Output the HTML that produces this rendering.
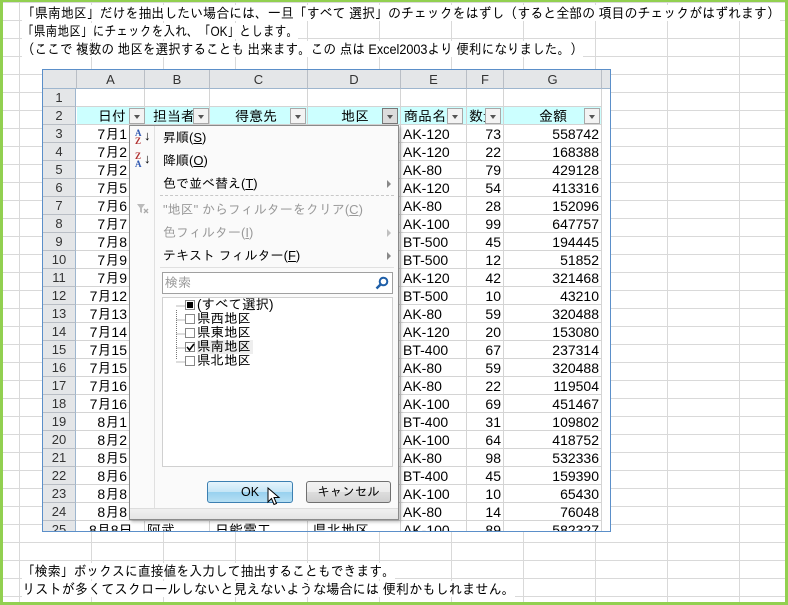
<!DOCTYPE html>
<html><head><meta charset="utf-8"><style>
*{margin:0;padding:0;box-sizing:border-box}
body{width:788px;height:605px;overflow:hidden;position:relative;background:#fff;font-family:"Liberation Sans","IPAGothic","Noto Sans CJK JP",sans-serif;font-size:14px;color:#000}
#grid{position:absolute;left:0;top:0;width:788px;height:605px;
background-image:repeating-linear-gradient(to right,transparent 0 18px,#d9d9d9 18px 19px,transparent 19px 72px),repeating-linear-gradient(to bottom,transparent 0 2px,#d9d9d9 2px 3px,transparent 3px 18px);
background-position:1px 0,0 0}
#gb{position:absolute;left:0;top:0;width:788px;height:605px;border:3px solid #92d050;border-top-width:2px}
.t{position:absolute;left:22px;white-space:nowrap;font-size:14px;line-height:16px;background:#fff;transform-origin:0 0}
#shot{position:absolute;left:42px;top:69px;width:569px;height:463px;border:1px solid #5b8fc9;overflow:hidden;background:#fff}
.a{position:absolute;white-space:nowrap}
.hd{position:absolute;top:0;height:19px;background:#e4e6e8;border-right:1px solid #b9bec5;border-bottom:1px solid #9eb6ce;text-align:center;font-size:13px;line-height:19px;color:#333}
.rh{position:absolute;left:0;width:33px;height:18px;background:#e4e6e8;border-bottom:1px solid #b9bec5;border-right:1px solid #9eb6ce;text-align:center;font-size:13px;line-height:18px;color:#333}
.vl{position:absolute;top:19px;width:1px;height:450px;background:#d4d4d4}
.hl{position:absolute;left:33px;width:526px;height:1px;background:#d4d4d4}
.c{position:absolute;font-size:14px;line-height:18px;white-space:nowrap}
.dd{position:absolute;top:38px;width:16px;height:16px;background:#f3f3f3;border:1px solid #a8a8a8}
.dd:after{content:"";position:absolute;left:4px;top:6px;border-left:3px solid transparent;border-right:3px solid transparent;border-top:4px solid #555}
#menu{position:absolute;left:129px;top:125px;width:270px;height:395px;background:#fafafa;border:1px solid #8a8a8a;box-shadow:2px 2px 3px rgba(0,0,0,.25);font-size:13px}
.mi{position:absolute;left:33px;white-space:nowrap;line-height:16px}
.g{color:#9a9a9a}
.arr{position:absolute;left:257px;width:0;height:0;border-top:4px solid transparent;border-bottom:4px solid transparent;border-left:4px solid #888}
.cb{position:absolute;left:55px;width:10px;height:10px;border:1px solid #888;background:#fff}
.li{position:absolute;left:67px;line-height:14px;font-size:13.5px;white-space:nowrap}
.btn{position:absolute;top:355px;height:22px;border:1px solid #707070;border-radius:3px;text-align:center;line-height:20px;font-size:12.5px}
</style></head><body>
<div id="grid"></div>
<div class="t" id="t1" style="top:5px">「県南地区」だけを抽出したい場合には、一旦「すべて 選択」のチェックをはずし（すると全部の 項目のチェックがはずれます）</div>
<div class="t" id="t2" style="top:23px">「県南地区」にチェックを入れ、「OK」とします。</div>
<div class="t" id="t3" style="top:41px">（ここで 複数の 地区を選択することも 出来ます。この 点は Excel2003より 便利になりました。）</div>
<div class="t" id="t4" style="top:563px">「検索」ボックスに直接値を入力して抽出することもできます。</div>
<div class="t" id="t5" style="top:581px">リストが多くてスクロールしないと見えないような場合には 便利かもしれません。</div>

<div id="shot">
<div class="hd" style="left:0;width:34px;"></div>
<div class="hd" style="left:34px;width:68px">A</div>
<div class="hd" style="left:102px;width:65px">B</div>
<div class="hd" style="left:167px;width:98px">C</div>
<div class="hd" style="left:265px;width:93px">D</div>
<div class="hd" style="left:358px;width:66px">E</div>
<div class="hd" style="left:424px;width:37px">F</div>
<div class="hd" style="left:461px;width:98px">G</div>
<div class="hd" style="left:559px;width:12px;border-right:0"></div>
<div style="position:absolute;left:34px;top:37px;width:525px;height:18px;background:#ccffff"></div>
<div class="vl" style="left:101px"></div><div class="vl" style="left:166px"></div><div class="vl" style="left:264px"></div><div class="vl" style="left:357px"></div><div class="vl" style="left:423px"></div><div class="vl" style="left:460px"></div><div class="vl" style="left:558px"></div>
<div class="hl" style="top:36px"></div><div class="hl" style="top:54px"></div><div class="hl" style="top:72px"></div><div class="hl" style="top:90px"></div><div class="hl" style="top:108px"></div><div class="hl" style="top:126px"></div><div class="hl" style="top:144px"></div><div class="hl" style="top:162px"></div><div class="hl" style="top:180px"></div><div class="hl" style="top:198px"></div><div class="hl" style="top:216px"></div><div class="hl" style="top:234px"></div><div class="hl" style="top:252px"></div><div class="hl" style="top:270px"></div><div class="hl" style="top:288px"></div><div class="hl" style="top:306px"></div><div class="hl" style="top:324px"></div><div class="hl" style="top:342px"></div><div class="hl" style="top:360px"></div><div class="hl" style="top:378px"></div><div class="hl" style="top:396px"></div><div class="hl" style="top:414px"></div><div class="hl" style="top:432px"></div><div class="hl" style="top:450px"></div>
<div class="rh" style="top:19px">1</div><div class="rh" style="top:37px">2</div><div class="rh" style="top:55px">3</div><div class="rh" style="top:73px">4</div><div class="rh" style="top:91px">5</div><div class="rh" style="top:109px">6</div><div class="rh" style="top:127px">7</div><div class="rh" style="top:145px">8</div><div class="rh" style="top:163px">9</div><div class="rh" style="top:181px">10</div><div class="rh" style="top:199px">11</div><div class="rh" style="top:217px">12</div><div class="rh" style="top:235px">13</div><div class="rh" style="top:253px">14</div><div class="rh" style="top:271px">15</div><div class="rh" style="top:289px">16</div><div class="rh" style="top:307px">17</div><div class="rh" style="top:325px">18</div><div class="rh" style="top:343px">19</div><div class="rh" style="top:361px">20</div><div class="rh" style="top:379px">21</div><div class="rh" style="top:397px">22</div><div class="rh" style="top:415px">23</div><div class="rh" style="top:433px">24</div><div class="rh" style="top:451px">25</div>
<div class="c" style="top:37px;left:55px">日付</div>
<div class="c" style="top:37px;left:110px">担当者</div>
<div class="c" style="top:37px;left:192px">得意先</div>
<div class="c" style="top:37px;left:298px">地区</div>
<div class="c" style="top:37px;left:361px">商品名</div>
<div class="c" style="top:37px;left:426px">数量</div>
<div class="c" style="top:37px;left:496px">金額</div>
<div class="dd" style="left:86px"></div><div class="dd" style="left:150px"></div><div class="dd" style="left:247px"></div><div class="dd" style="left:339px;background:#dcdcdc;border-color:#777"></div><div class="dd" style="left:404px"></div><div class="dd" style="left:442px"></div><div class="dd" style="left:541px"></div>
<div class="c" style="left:34px;width:50px;text-align:right;top:55px;line-height:18px">7月1<br>7月2<br>7月2<br>7月5<br>7月6<br>7月7<br>7月8<br>7月9<br>7月9<br>7月12<br>7月13<br>7月14<br>7月15<br>7月15<br>7月16<br>7月16<br>8月1<br>8月2<br>8月5<br>8月6<br>8月8<br>8月8</div>
<div class="c" style="left:360px;top:55px">AK-120<br>AK-120<br>AK-80<br>AK-120<br>AK-80<br>AK-100<br>BT-500<br>BT-500<br>AK-120<br>BT-500<br>AK-80<br>AK-120<br>BT-400<br>AK-80<br>AK-80<br>AK-100<br>BT-400<br>AK-100<br>AK-80<br>BT-400<br>AK-100<br>AK-80<br>AK-100</div>
<div class="c" style="left:424px;width:34px;text-align:right;top:55px">73<br>22<br>79<br>54<br>28<br>99<br>45<br>12<br>42<br>10<br>59<br>20<br>67<br>59<br>22<br>69<br>31<br>64<br>98<br>45<br>10<br>14<br>89</div>
<div class="c" style="left:461px;width:95px;text-align:right;top:55px">558742<br>168388<br>429128<br>413316<br>152096<br>647757<br>194445<br>51852<br>321468<br>43210<br>320488<br>153080<br>237314<br>320488<br>119504<br>451467<br>109802<br>418752<br>532336<br>159390<br>65430<br>76048<br>582327</div>
<div class="c" style="top:451px;left:46px">8月8日</div><div class="c" style="top:451px;left:104px">阿武</div><div class="c" style="top:451px;left:172px">日能電工</div><div class="c" style="top:451px;left:270px">県北地区</div>
</div>

<div id="menu">
<div style="position:absolute;left:24px;top:0;width:1px;height:385px;background:#e0e0e0"></div>
<div class="a" style="left:5px;top:3px;font-size:9px;line-height:8px;font-weight:bold;font-family:'Liberation Serif',serif"><span style="color:#2e56b0">A</span><br><span style="color:#b03030">Z</span></div><div class="a" style="left:14px;top:2px;font-size:13px">↓</div>
<div class="a" style="left:5px;top:26px;font-size:9px;line-height:8px;font-weight:bold;font-family:'Liberation Serif',serif"><span style="color:#b03030">Z</span><br><span style="color:#2e56b0">A</span></div><div class="a" style="left:14px;top:25px;font-size:13px">↓</div>
<div class="mi" style="top:4px">昇順(<u>S</u>)</div>
<div class="mi" style="top:27px">降順(<u>O</u>)</div>
<div class="mi" style="top:50px">色で並べ替え(<u>T</u>)</div><div class="arr" style="top:54px"></div>
<div style="position:absolute;left:30px;top:69px;width:234px;border-top:1px dashed #c8c8c8"></div>
<svg style="position:absolute;left:6px;top:77px" width="14" height="12"><path d="M1 1 H9 L6 5 V10 L4 9 V5 Z" fill="#bbb"/><path d="M8 6 L12 10 M12 6 L8 10" stroke="#aaa" stroke-width="1.3"/></svg>
<div class="mi g" style="top:76px">"地区" からフィルターをクリア(<u>C</u>)</div>
<div class="mi g" style="top:99px">色フィルター(<u>I</u>)</div><div class="arr" style="top:103px;border-left-color:#c0c0c0"></div>
<div class="mi" style="top:122px">テキスト フィルター(<u>F</u>)</div><div class="arr" style="top:126px"></div>
<div style="position:absolute;left:30px;top:141px;width:234px;height:1px;background:#e0e0e0"></div>
<div style="position:absolute;left:32px;top:146px;width:231px;height:22px;border:1px solid #a0a0a0;background:#fff"><span class="a g" style="left:2px;top:2px">検索</span>
<svg style="position:absolute;right:3px;top:3px" width="14" height="14" viewBox="0 0 14 14"><circle cx="8.5" cy="5.5" r="3.8" fill="none" stroke="#1f5fa8" stroke-width="2"/><path d="M6 8 L1.5 12.5" stroke="#1f5fa8" stroke-width="2.5"/></svg></div>
<div style="position:absolute;left:32px;top:171px;width:231px;height:170px;border:1px solid #d0d0d0;background:#fff">
<svg style="position:absolute;left:0;top:0" width="60" height="80"><path d="M13.5 12 V62 M13.5 8 H22 M13.5 22 H22 M13.5 36 H22 M13.5 50 H22 M13.5 64 H22" stroke="#777" stroke-dasharray="1,1" fill="none"/></svg>
<div class="cb" style="left:22px;top:2px"><div style="position:absolute;left:1px;top:1px;width:6px;height:6px;background:#000"></div></div>
<div class="cb" style="left:22px;top:16px"></div>
<div class="cb" style="left:22px;top:30px"></div>
<div class="cb" style="left:22px;top:44px"><svg style="position:absolute;left:0;top:0" width="9" height="9"><path d="M1 4 L3.5 7 L8 1" stroke="#000" stroke-width="1.6" fill="none"/></svg></div>
<div class="cb" style="left:22px;top:58px"></div>
<div class="li" style="left:34px;top:0">(すべて選択)</div>
<div class="li" style="left:34px;top:14px">県西地区</div>
<div class="li" style="left:34px;top:28px">県東地区</div>
<div class="li" style="left:34px;top:42px;background:#eee;padding-right:2px">県南地区</div>
<div class="li" style="left:34px;top:56px">県北地区</div>
</div>
<div class="btn" style="left:77px;width:86px;border-color:#3c7fb1;background:linear-gradient(#e5f4fc,#c4e5f6 50%,#98d1ef 51%,#b6dff3)">OK</div>
<div class="btn" style="left:176px;width:85px;background:linear-gradient(#f2f2f2,#ebebeb 50%,#dddddd 51%,#cfcfcf)">キャンセル</div>
<svg style="position:absolute;left:137px;top:361px" width="14" height="20"><path d="M1 1 V15 L4.5 11.5 L7 17.5 L9.5 16.5 L7 10.5 L12 10.5 Z" fill="#fff" stroke="#000" stroke-width="1"/></svg>
<div style="position:absolute;left:0;top:382px;width:268px;height:11px;background:linear-gradient(#f0f0f0,#e4e4e4);border-top:1px solid #ddd"></div>
</div>
<div id="gb"></div>
<script>
[["t1",758],["t2",276],["t3",561],["t4",373],["t5",493]].forEach(function(p){var e=document.getElementById(p[0]);var w=e.scrollWidth;if(w>0)e.style.transform="scaleX("+(p[1]/w)+")";});
</script>
</body></html>
